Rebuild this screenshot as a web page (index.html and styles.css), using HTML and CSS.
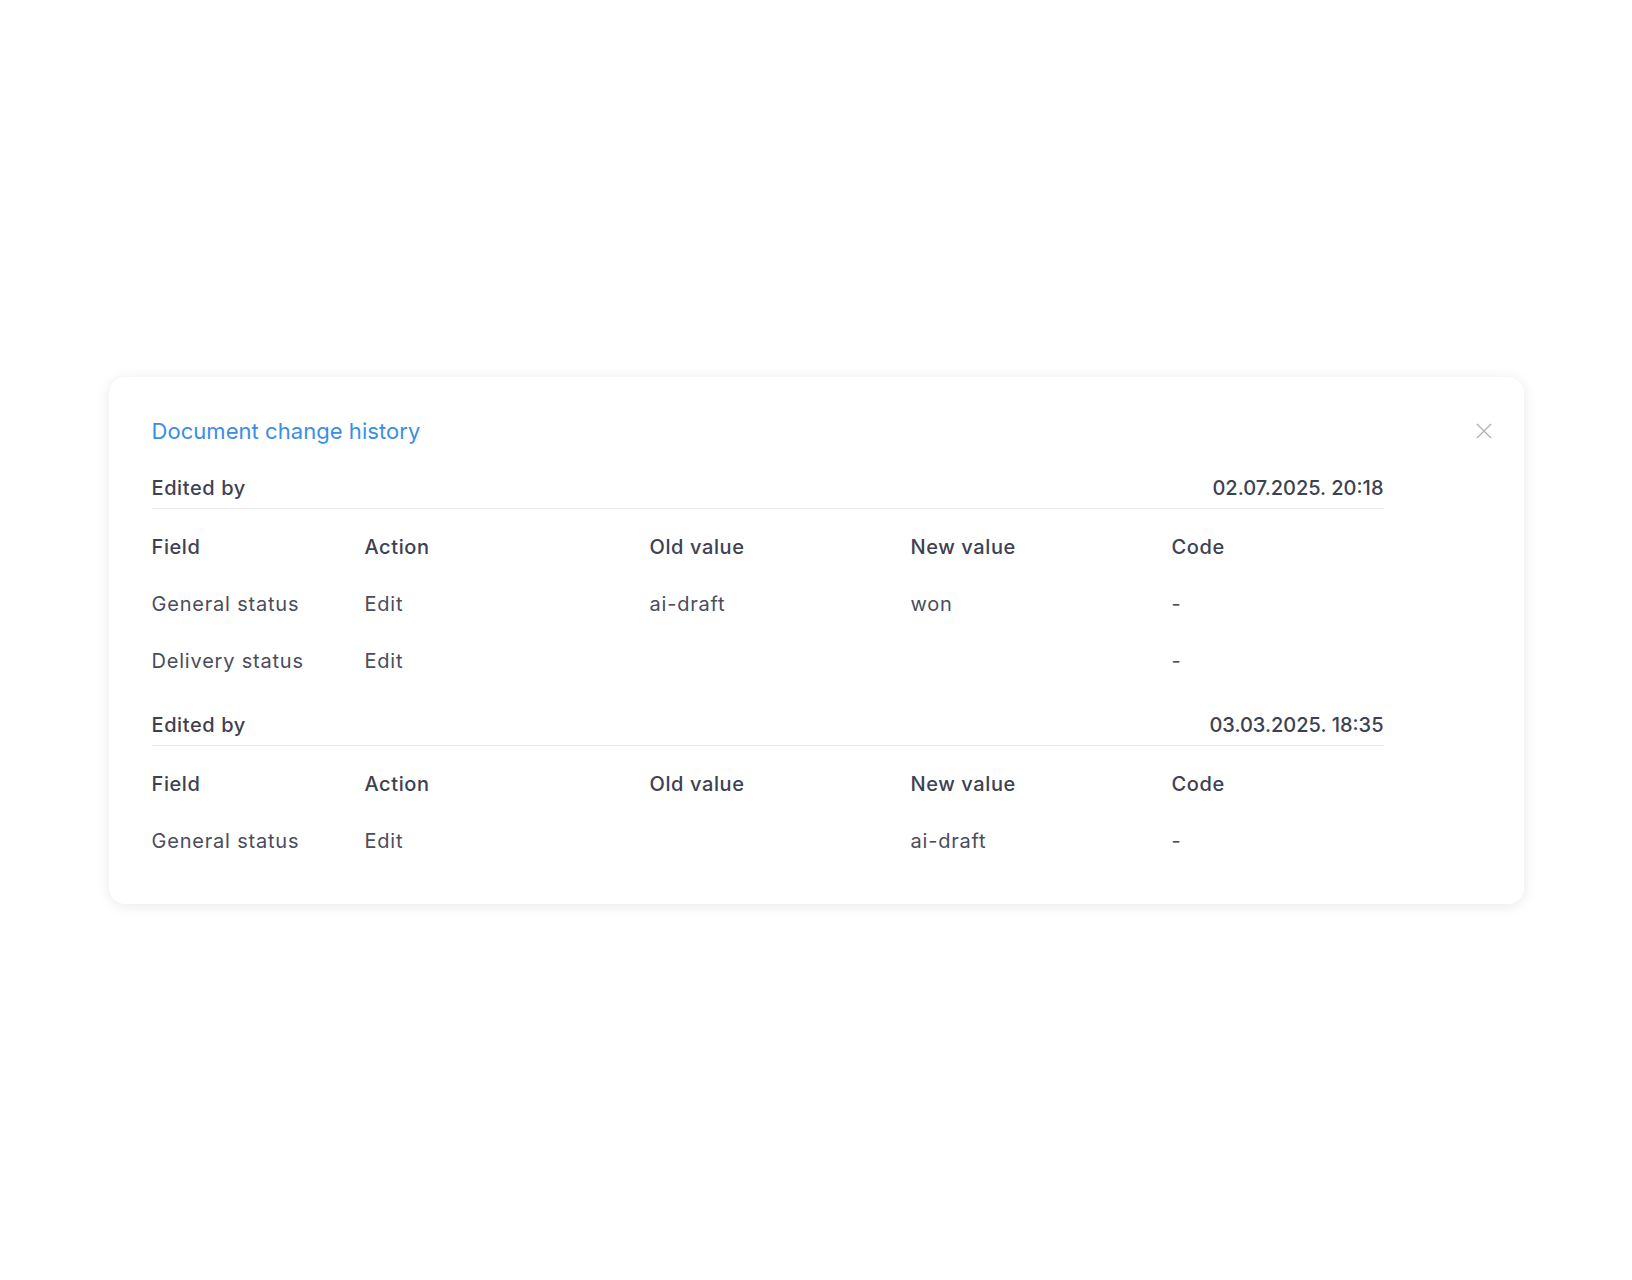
FILE: index.html
```html
<!DOCTYPE html>
<html lang="en">
<head>
    <meta charset="UTF-8">
    <meta name="viewport" content="width=device-width, initial-scale=1.0">
    <title>Document change history</title>
    <link rel="stylesheet" href="styles.css">
</head>
<body>
    <div class="modal">
        <div class="modal-head">
            <h2 class="modal-title">Document change history</h2>
            <button class="close-btn" aria-label="Close">
                <svg width="16" height="16" viewBox="0 0 16 16"><path d="M1 1L15 15M15 1L1 15" stroke="#b3b3b3" stroke-width="1.4" fill="none"/></svg>
            </button>
        </div>

        <div class="entry">
            <div class="entry-head">
                <span>Edited by</span>
                <span class="date">02.07.2025. 20:18</span>
            </div>
            <div class="changes">
                <div class="row head-row">
                    <span>Field</span><span>Action</span><span>Old value</span><span>New value</span><span>Code</span>
                </div>
                <div class="row">
                    <span>General status</span><span>Edit</span><span>ai-draft</span><span>won</span><span>-</span>
                </div>
                <div class="row">
                    <span>Delivery status</span><span>Edit</span><span></span><span></span><span>-</span>
                </div>
            </div>
        </div>

        <div class="entry">
            <div class="entry-head">
                <span>Edited by</span>
                <span class="date">03.03.2025. 18:35</span>
            </div>
            <div class="changes">
                <div class="row head-row">
                    <span>Field</span><span>Action</span><span>Old value</span><span>New value</span><span>Code</span>
                </div>
                <div class="row">
                    <span>General status</span><span>Edit</span><span></span><span>ai-draft</span><span>-</span>
                </div>
            </div>
        </div>
    </div>
</body>
</html>
```

FILE: styles.css
```css
* {margin: 0; padding: 0; box-sizing: border-box;}
body {
    font-family: Inter, "Open Sans", sans-serif;
    background: #fff;
    color: #4a4d5c;
    min-height: 100vh;
    display: flex;
    align-items: center;
    justify-content: center;
}
.modal {
    width: 1415px;
    background: #fff;
    border-radius: 16px;
    box-shadow: 0 2px 14px rgba(0,0,0,0.09);
    padding: 40px 32px 34px 43px;
}
.modal-head {
    display: flex;
    align-items: center;
    justify-content: space-between;
    height: 28px;
    margin-bottom: 31px;
}
.modal-title {
    font-size: 22px;
    font-weight: 400;
    color: #3a8ee6;
    line-height: 28px;
    letter-spacing: 0.05px;
}
.close-btn {
    background: none;
    border: none;
    width: 16px;
    height: 16px;
    cursor: pointer;
    display: flex;
}
.entry {width: 1232px;}
.entry + .entry {margin-top: 23px;}
.entry-head {
    display: flex;
    justify-content: space-between;
    font-size: 20px;
    font-weight: 500;
    line-height: 24px;
    letter-spacing: 0.6px;
    color: #3e4151;
    padding-bottom: 8px;
    border-bottom: 1px solid #ebebee;
}
.entry-head .date {letter-spacing: 0; font-weight: 450;}
.changes {margin-top: 10px;}
.row {
    display: grid;
    grid-template-columns: 213px 285px 261px 261px 1fr;
    height: 57px;
    align-items: center;
    font-size: 20px;
    line-height: 24px;
    letter-spacing: 0.8px;
}
.head-row {font-weight: 500; color: #3e4151; letter-spacing: 0.6px;}
```
